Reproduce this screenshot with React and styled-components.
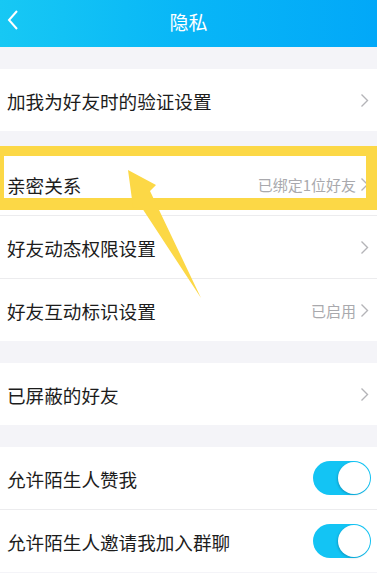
import React from 'react';
import styled, { createGlobalStyle } from 'styled-components';

const Global = createGlobalStyle`
  html, body {
    margin: 0;
    padding: 0;
    background: #f4f4f8;
    font-family: "Noto Sans CJK SC", "Noto Sans", sans-serif;
  }
`;

const Page = styled.div`
  position: relative;
  width: 377px;
  height: 573px;
  overflow: hidden;
  background: #f4f4f8;
`;

const Header = styled.div`
  height: 47px;
  background: linear-gradient(90deg, #17c8f4 0%, #08b6f7 50%, #02a8f8 100%);
  display: flex;
  align-items: center;
  justify-content: center;
  position: relative;
`;

const Title = styled.div`
  color: #fff;
  font-size: 19px;
  margin-top: -4px;
`;

const Back = styled.svg`
  position: absolute;
  left: 6px;
  top: 9px;
`;

const Section = styled.div`
  background: #fff;
  margin-top: 22px;
`;

const Row = styled.div`
  height: 62px;
  display: flex;
  align-items: center;
  padding: 0 7px;
  border-top: ${p => (p.$first ? 'none' : '1px solid #ececee')};
`;

const Label = styled.div`
  flex: 1;
  font-size: 18.6px;
  color: #1c1c1c;
  letter-spacing: 0;
`;

const Value = styled.div`
  font-size: 15px;
  color: #a9a9ad;
  margin-right: 4px;
`;

const Chevron = () => (
  <svg width="9" height="15" viewBox="0 0 9 15" style={{ marginRight: 1 }}>
    <path d="M1.5 1.5 L7.5 7.5 L1.5 13.5" fill="none" stroke="#b4b4b8" strokeWidth="1.4" />
  </svg>
);

const Track = styled.div`
  width: 58px;
  height: 34px;
  border-radius: 17px;
  background: #13c4f4;
  display: flex;
  align-items: center;
  justify-content: flex-end;
  padding: 0 1px;
  box-sizing: border-box;
  margin-right: -1px;
`;

const Knob = styled.div`
  width: 32px;
  height: 32px;
  border-radius: 50%;
  background: #fff;
  box-shadow: -1px 1px 2px rgba(0, 60, 90, 0.25);
`;

const Highlight = styled.div`
  position: absolute;
  left: 0;
  top: 146px;
  width: 377px;
  height: 64px;
  box-sizing: border-box;
  border: solid #fcd846;
  border-width: 10px 11px 12px 4px;
  pointer-events: none;
`;

const Arrow = styled.svg`
  position: absolute;
  left: 0;
  top: 0;
  pointer-events: none;
`;

const Toggle = () => (
  <Track>
    <Knob />
  </Track>
);

const NavRow = ({ label, value, first }) => (
  <Row $first={first}>
    <Label>{label}</Label>
    {value && <Value>{value}</Value>}
    <Chevron />
  </Row>
);

const SwitchRow = ({ label, first }) => (
  <Row $first={first}>
    <Label>{label}</Label>
    <Toggle />
  </Row>
);

export default function App() {
  return (
    <Page>
      <Global />
      <Header>
        <Back width="14" height="22" viewBox="0 0 14 22">
          <path d="M11 2 L3 11 L11 20" fill="none" stroke="#fff" strokeWidth="2" />
        </Back>
        <Title>隐私</Title>
      </Header>
      <Section>
        <NavRow first label="加我为好友时的验证设置" />
      </Section>
      <Section>
        <NavRow first label="亲密关系" value="已绑定1位好友" />
        <NavRow label="好友动态权限设置" />
        <NavRow label="好友互动标识设置" value="已启用" />
      </Section>
      <Section>
        <NavRow first label="已屏蔽的好友" />
      </Section>
      <Section>
        <SwitchRow first label="允许陌生人赞我" />
        <SwitchRow label="允许陌生人邀请我加入群聊" />
      </Section>
      <Highlight />
      <Arrow width="377" height="573" viewBox="0 0 377 573">
        <polygon
          points="128,170 156,185 150,191 201,298 142,208 133,207"
          fill="#fcd846"
        />
      </Arrow>
    </Page>
  );
}
